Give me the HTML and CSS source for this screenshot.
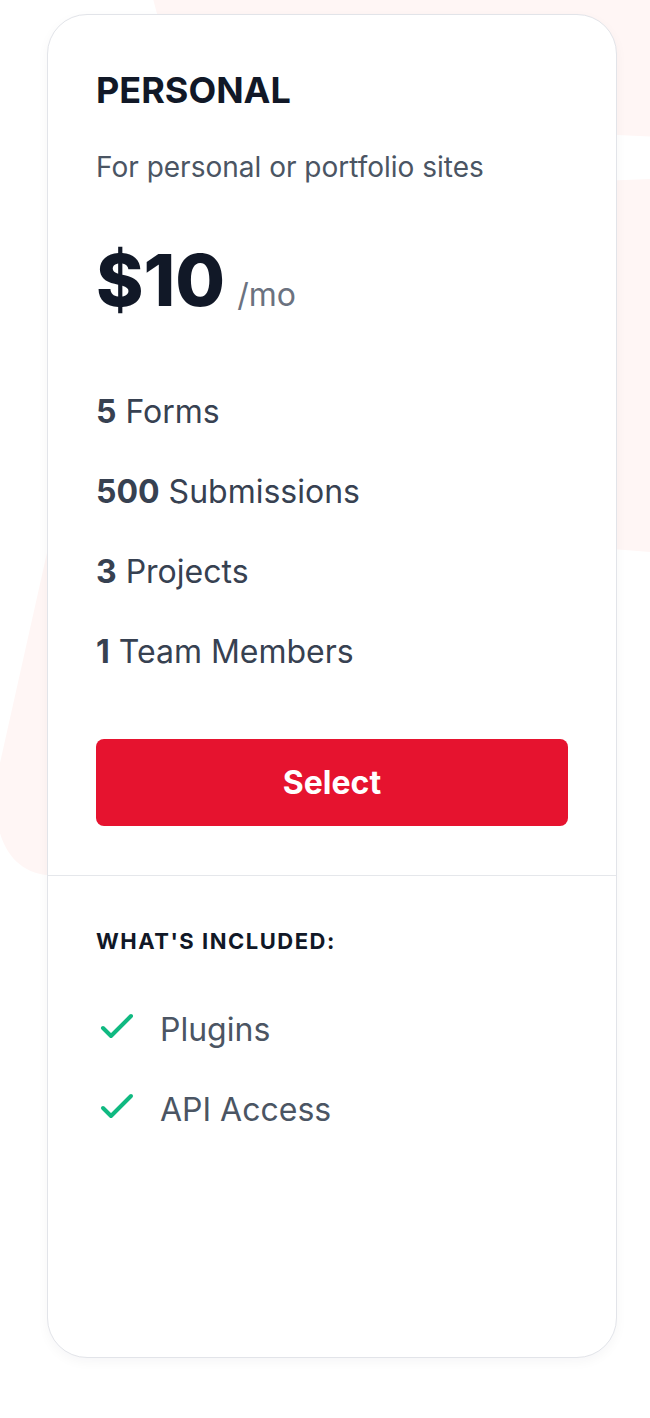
FILE: index.html
```html
<!DOCTYPE html>
<html lang="en">
<head>
<meta charset="utf-8">
<title>Personal plan</title>
<link rel="stylesheet" href="styles.css">
</head>
<body>
<div class="page">
  <svg class="backdrop" width="650" height="1418" viewBox="0 0 650 1418" aria-hidden="true">
    <path d="M152,-5 L700,-5 L700,139 L617,135 L172,70 Z" />
    <path d="M600,181 L700,177 L700,556 L600,548 Z" />
    <path d="M61,490 L0,763 C-12,817 0,870 47,875 L120,875 L120,490 Z" />
  </svg>
  <div class="card">
    <div class="card-top">
      <h2 class="plan-name">PERSONAL</h2>
      <p class="plan-desc">For personal or portfolio sites</p>
      <div class="price">
        <span class="amount">$10</span>
        <span class="period">/mo</span>
      </div>
      <ul class="limits">
        <li><strong>5</strong> Forms</li>
        <li><strong>500</strong> Submissions</li>
        <li><strong>3</strong> Projects</li>
        <li><strong>1</strong> Team Members</li>
      </ul>
      <button class="select-btn" type="button">Select</button>
    </div>
    <div class="card-bottom">
      <h3 class="included-title">WHAT'S INCLUDED:</h3>
      <ul class="included">
        <li>
          <svg class="check" width="32" height="24" viewBox="3.5 5.5 16 12" aria-hidden="true"><path d="M5 13l4 4L19 7"/></svg>
          <span>Plugins</span>
        </li>
        <li>
          <svg class="check" width="32" height="24" viewBox="3.5 5.5 16 12" aria-hidden="true"><path d="M5 13l4 4L19 7"/></svg>
          <span>API Access</span>
        </li>
      </ul>
    </div>
  </div>
</div>
</body>
</html>
```

FILE: styles.css
```css
* { box-sizing: border-box; }

html, body {
  margin: 0;
  padding: 0;
  background: #ffffff;
}

body {
  font-family: Inter, "Noto Sans", "Liberation Sans", sans-serif;
  color: #111827;
}

.page {
  position: relative;
  width: 650px;
  min-height: 1418px;
  padding: 14px 0 0 47px;
  overflow: hidden;
}

.backdrop {
  position: absolute;
  top: 0;
  left: 0;
  z-index: 0;
  overflow: visible;
}

.backdrop path {
  fill: #fff6f5;
}

.card {
  position: relative;
  z-index: 1;
  width: 570px;
  height: 1344px;
  display: flex;
  flex-direction: column;
  background: #ffffff;
  border: 1px solid #e2e4e9;
  border-radius: 40px;
  box-shadow: 0 4px 12px rgba(17, 24, 39, 0.04);
}

.card-top {
  padding: 48px 48px 49px;
  border-bottom: 1px solid #e5e7eb;
}

.plan-name {
  margin: 0;
  font-size: 36px;
  line-height: 54px;
  font-weight: 700;
  color: #111827;
}

.plan-desc {
  margin: 32px 0 0;
  font-size: 28px;
  line-height: 36px;
  color: #4b5563;
}

.price {
  margin-top: 61px;
  display: flex;
  align-items: baseline;
  gap: 12px;
  height: 68px;
}

.amount {
  font-size: 72px;
  line-height: 68px;
  font-weight: 800;
  color: #111827;
}

.period {
  font-size: 32px;
  line-height: 68px;
  color: #6b7280;
}

.limits {
  list-style: none;
  margin: 78px 0 0;
  padding: 0;
  display: flex;
  flex-direction: column;
  gap: 40px;
}

.limits li {
  font-size: 32px;
  line-height: 40px;
  color: #374151;
}

.limits strong {
  font-weight: 700;
}

.select-btn {
  display: block;
  width: 100%;
  height: 87px;
  margin-top: 67px;
  border: 0;
  border-radius: 8px;
  background: #e6132f;
  color: #ffffff;
  font-family: inherit;
  font-size: 32px;
  font-weight: 700;
}

.card-bottom {
  flex: 1;
  padding: 51px 48px 48px;
}

.included-title {
  margin: 0;
  font-size: 22px;
  line-height: 28px;
  font-weight: 700;
  letter-spacing: 1.5px;
  color: #111827;
}

.included {
  list-style: none;
  margin: 55px 0 0;
  padding: 0;
  display: flex;
  flex-direction: column;
  gap: 40px;
}

.included li {
  display: flex;
  align-items: flex-start;
  gap: 28px;
  font-size: 32px;
  line-height: 40px;
  color: #4b5563;
}

.check {
  flex: none;
  margin: 3px 0 0 4px;
  overflow: visible;
}

.check path {
  fill: none;
  stroke: #10b981;
  stroke-width: 2;
  stroke-linecap: round;
  stroke-linejoin: round;
}
```
